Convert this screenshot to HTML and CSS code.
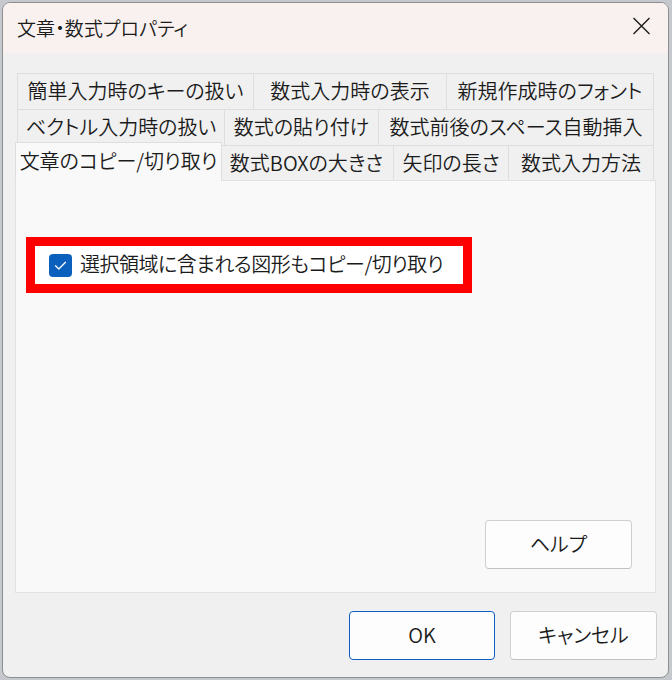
FILE: index.html
```html
<!DOCTYPE html>
<html lang="ja">
<head>
<meta charset="utf-8">
<title>文章・数式プロパティ</title>
<link rel="stylesheet" href="styles.css">
</head>
<body>
<div class="window">
  <div class="titlebar">
    <span class="title">文章・数式プロパティ</span>
    <svg class="close" width="19" height="18" viewBox="0 0 19 18"><path d="M1.5 1 L17.5 17 M17.5 1 L1.5 17" stroke="#1b1b1b" stroke-width="1.4" fill="none"/></svg>
  </div>
  <div class="content">
    <div class="tabs">
      <div class="row row1">
        <div class="tab first">簡単入力時のキーの扱い</div>
        <div class="tab">数式入力時の表示</div>
        <div class="tab">新規作成時のフォント</div>
      </div>
      <div class="row row2">
        <div class="tab first">ベクトル入力時の扱い</div>
        <div class="tab">数式の貼り付け</div>
        <div class="tab">数式前後のスペース自動挿入</div>
      </div>
      <div class="row row3">
        <div class="tab first selected">文章のコピー/切り取り</div>
        <div class="tab">数式BOXの大きさ</div>
        <div class="tab">矢印の長さ</div>
        <div class="tab">数式入力方法</div>
      </div>
    </div>
    <div class="panel">
      <div class="highlight">
        <label class="check">
          <span class="box"><svg width="23" height="23" viewBox="0 0 23 23"><path d="M6.5 11.8 L9.8 15 L16.5 8.3" stroke="#fff" stroke-width="1.3" fill="none" stroke-linecap="round" stroke-linejoin="round"/></svg></span>
          <span class="label">選択領域に含まれる図形もコピー/切り取り</span>
        </label>
      </div>
      <button class="btn help">ヘルプ</button>
    </div>
    <div class="actions">
      <button class="btn ok">OK</button>
      <button class="btn">キャンセル</button>
    </div>
  </div>
</div>
</body>
</html>
```
FILE: styles.css
```css
* { box-sizing: border-box; }
html, body { margin: 0; padding: 0; }
body {
  width: 672px;
  height: 680px;
  background: #c5c8cc;
  font-family: "Noto Sans CJK JP", "Noto Sans", sans-serif;
  font-feature-settings: "palt";
  font-weight: 350;
  color: #1b1b1b;
  overflow: hidden;
}
.window {
  margin: 2px 0 0 2px;
  width: 667px;
  height: 676px;
  border: 1px solid #8e8e8e;
  border-radius: 8px;
  background: #f0f0f0;
  overflow: hidden;
  display: flex;
  flex-direction: column;
}
.titlebar {
  height: 50px;
  flex: none;
  background: #f9f1ef;
  display: flex;
  align-items: center;
  justify-content: space-between;
  padding: 0 17px 0 14px;
}
.title {
  font-size: 19px;
  letter-spacing: 0.1px;
  margin-top: -2px;
}
.close { margin-top: -4px; }
.content {
  flex: 1;
  padding: 20px 12px 0 12px;
  display: flex;
  flex-direction: column;
}
.tabs {
  margin: 0 2px;
  font-size: 20px;
}
.row {
  display: grid;
  height: 36px;
}
.row3 { height: 35px; }
.row1 { grid-template-columns: 237px 193px 1fr; }
.row2 { grid-template-columns: 208px 154px 1fr; }
.row3 { grid-template-columns: 203px 174px 115px 1fr; }
.tab {
  display: flex;
  align-items: center;
  justify-content: center;
  background: #f0f0f0;
  border-top: 1px solid #dedede;
  border-right: 1px solid #dedede;
  white-space: nowrap;
  line-height: 1;
  padding-bottom: 1px;
}
.tab.first { border-left: 1px solid #dedede; }
.tab.selected {
  position: relative;
  z-index: 1;
  margin: -3px -2px -1px -2px;
  background: #f9f9f9;
  border: 1px solid #dedede;
  border-bottom: none;
  padding-bottom: 2px;
}
.panel {
  height: 413px;
  flex: none;
  background: #f9f9f9;
  border: 1px solid #e2e2e2;
  display: flex;
  flex-direction: column;
  align-items: flex-start;
  padding: 56px 23px 23px 10px;
}
.highlight {
  width: 446px;
  height: 56px;
  border: 9px solid #ff0000;
  background: #ffffff;
  display: flex;
  align-items: center;
  padding-left: 14px;
}
.check {
  display: flex;
  align-items: center;
  gap: 8px;
}
.box {
  width: 23px;
  height: 23px;
  border-radius: 4px;
  background: #0b5fbd;
  display: flex;
}
.label {
  font-size: 20px;
  letter-spacing: -0.5px;
  line-height: 1;
  padding-bottom: 2px;
}
.btn {
  width: 147px;
  height: 49px;
  border: 1px solid #d0d0d0;
  border-bottom-color: #c2c2c2;
  border-radius: 4px;
  background: #fdfdfd;
  font-family: inherit;
  font-feature-settings: "palt";
  font-weight: 350;
  font-size: 20px;
  color: #1b1b1b;
  padding: 0 0 2px 0;
}
.help {
  margin-top: auto;
  align-self: flex-end;
}
.actions {
  display: flex;
  justify-content: flex-end;
  gap: 15px;
  margin: 18px -1px 0 0;
}
.ok {
  width: 146px;
  border: 1px solid #0b5fbd;
}
```
